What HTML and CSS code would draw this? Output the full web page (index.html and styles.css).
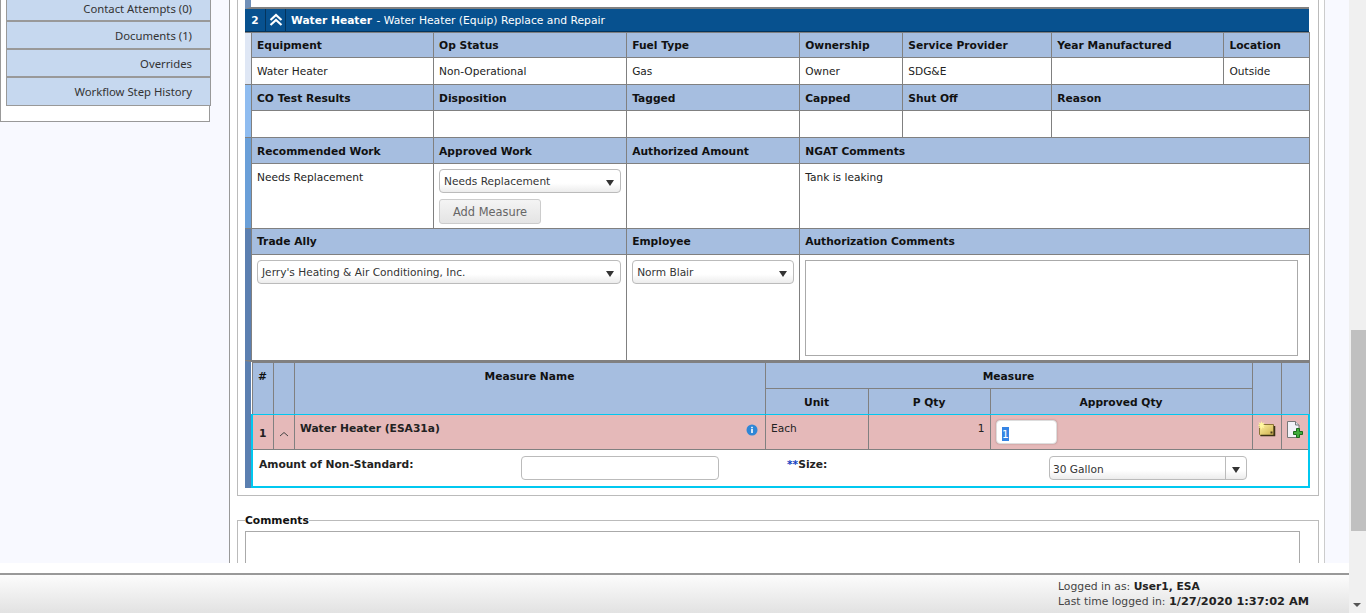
FILE: index.html
```html
<!DOCTYPE html>
<html lang="en">
<head>
    <meta charset="UTF-8">
    <meta name="viewport" content="width=device-width, initial-scale=1.0">
    <title>Work Order</title>
    <link rel="stylesheet" href="styles.css">
</head>
<body>
    <div class="shell">
        <div class="app">
            <div class="content">
                <div class="side">
                    <div class="panel">
                        <div class="tab tab-first">Contact Attempts (0)</div>
                        <div class="tab">Documents (1)</div>
                        <div class="tab">Overrides</div>
                        <div class="tab">Workflow Step History</div>
                    </div>
                </div>
                <div class="main">
                    <div class="section">
                        <div class="prev"></div>
                        <div class="head-bar">
                            <span class="head-num">2</span>
                            <span class="head-toggle">
                                <svg width="14" height="14" viewBox="0 0 14 14"><path d="M1.500 7 7 2l5.500 5M1.500 12 7 7l5.500 5" fill="none" stroke="#fff" stroke-width="2.200"/></svg>
                            </span>
                            <span class="head-title"><b>Water Heater</b> - Water Heater (Equip) Replace and Repair</span>
                        </div>
                        <table class="equip">
                            <colgroup>
                                <col class="c-strip"><col class="c1"><col class="c2"><col class="c3"><col class="c4"><col class="c5"><col class="c6"><col class="c7">
                            </colgroup>
                            <tr class="r-head r-flat r-first">
                                <td class="strip s1" rowspan="2"></td>
                                <th>Equipment</th><th>Op Status</th><th>Fuel Type</th><th>Ownership</th><th>Service Provider</th><th>Year Manufactured</th><th>Location</th>
                            </tr>
                            <tr class="r-val">
                                <td>Water Heater</td><td>Non-Operational</td><td>Gas</td><td>Owner</td><td>SDG&amp;E</td><td></td><td>Outside</td>
                            </tr>
                            <tr class="r-head">
                                <td class="strip s2" rowspan="2"></td>
                                <th>CO Test Results</th><th>Disposition</th><th>Tagged</th><th>Capped</th><th>Shut Off</th><th colspan="2">Reason</th>
                            </tr>
                            <tr class="r-val">
                                <td></td><td></td><td></td><td></td><td></td><td colspan="2"></td>
                            </tr>
                            <tr class="r-head">
                                <td class="strip s3" rowspan="2"></td>
                                <th>Recommended Work</th><th>Approved Work</th><th>Authorized Amount</th><th colspan="4">NGAT Comments</th>
                            </tr>
                            <tr class="r-work">
                                <td class="top top-text">Needs Replacement</td>
                                <td class="top">
                                    <div class="combo">Needs Replacement<span class="arrow"></span></div>
                                    <div class="btn">Add Measure</div>
                                </td>
                                <td></td>
                                <td class="top top-text" colspan="4">Tank is leaking</td>
                            </tr>
                            <tr class="r-head r-flat">
                                <td class="strip s4" rowspan="2"></td>
                                <th colspan="2">Trade Ally</th><th>Employee</th><th colspan="4">Authorization Comments</th>
                            </tr>
                            <tr class="r-ally">
                                <td class="top" colspan="2"><div class="combo">Jerry's Heating &amp; Air Conditioning, Inc.<span class="arrow"></span></div></td>
                                <td class="top"><div class="combo">Norm Blair<span class="arrow"></span></div></td>
                                <td class="top" colspan="4"><div class="memo"></div></td>
                            </tr>
                        </table>
                        <div class="measures-wrap">
                            <table class="measures">
                                <colgroup>
                                    <col class="m1"><col class="m2"><col class="m3"><col class="m4"><col class="m5"><col class="m6"><col class="m7"><col class="m8">
                                </colgroup>
                                <tr class="mh1">
                                    <th rowspan="2" class="center up shift">#</th>
                                    <th rowspan="2"></th>
                                    <th rowspan="2" class="center up">Measure Name</th>
                                    <th colspan="3" class="center">Measure</th>
                                    <th rowspan="2"></th>
                                    <th rowspan="2"></th>
                                </tr>
                                <tr class="mh2">
                                    <th class="center">Unit</th><th class="center">P Qty</th><th class="center">Approved Qty</th>
                                </tr>
                                <tr class="m-row">
                                    <td class="center shift"><b>1</b></td>
                                    <td class="center">
                                        <svg width="10" height="6" viewBox="0 0 10 6"><path d="M1 5 5 1.500 9 5" fill="none" stroke="#444" stroke-width="1"/></svg>
                                    </td>
                                    <td class="up name">
                                        <b>Water Heater (ESA31a)</b>
                                        <svg class="info" width="12" height="12" viewBox="0 0 12 12"><circle cx="6" cy="6" r="5.500" fill="#2f86d6"/><rect x="5.200" y="5" width="1.600" height="4" fill="#fff"/><rect x="5.200" y="2.800" width="1.600" height="1.500" fill="#fff"/></svg>
                                    </td>
                                    <td class="up">Each</td>
                                    <td class="up right">1</td>
                                    <td class="up"><div class="qty"><span class="sel">1</span></div></td>
                                    <td class="center icon-cell">
                                        <svg width="18" height="16" viewBox="0 0 18 16">
                                            <defs>
                                                <linearGradient id="folderFill" x1="0" y1="0" x2="1" y2="1">
                                                    <stop offset="0" stop-color="#fff0a0"/>
                                                    <stop offset="1" stop-color="#cdb04e"/>
                                                </linearGradient>
                                            </defs>
                                            <path d="M1.500 3.500h14v11h-13l-1-1z" fill="url(#folderFill)" stroke="#8a7434"/>
                                            <path d="M2.500 14.500h14V5" fill="none" stroke="#3d3215" stroke-width="1.500"/>
                                            <rect x="12.500" y="10.500" width="2" height="2" fill="#4a3d1c"/>
                                            <path d="M3.500 0 4.300 2.200 6.500 1.200 5.400 3.400 7.500 4.200 5.400 5 6.500 7.200 4.300 6.200 3.500 8.400 2.700 6.200.5 7.200 1.600 5-.5 4.200 1.600 3.400.5 1.200 2.700 2.200z" fill="#fff6a0"/>
                                        </svg>
                                    </td>
                                    <td class="center icon-cell">
                                        <svg width="18" height="18" viewBox="0 0 18 18">
                                            <path d="M1.500 .5h8L13 4v12.500H1.500z" fill="#f2f3f8" stroke="#777"/>
                                            <path d="M9.500 .5V4H13" fill="#dfe3ea" stroke="#777"/>
                                            <path d="M10.500 7.500h3v3h3v3h-3v3h-3v-3h-3v-3h3z" fill="#3fae3a" stroke="#1d6b1c"/>
                                        </svg>
                                    </td>
                                </tr>
                                <tr class="m-sub">
                                    <td colspan="8">
                                        <div class="sub-row">
                                            <span class="sub-label"><b>Amount of Non-Standard:</b></span>
                                            <span class="sub-input"></span>
                                            <span class="sub-size"><b><span class="req">**</span>Size:</b></span>
                                            <div class="combo combo-size">30 Gallon<span class="arrow-box"><span class="arrow"></span></span></div>
                                        </div>
                                    </td>
                                </tr>
                            </table>
                        </div>
                    </div>
                    <fieldset class="comments">
                        <legend>Comments</legend>
                        <div class="comment-box"></div>
                    </fieldset>
                </div>
                <div class="gutter"></div>
            </div>
            <div class="footer">
                <div class="footer-bar">
                    <div class="login">
                        <div>Logged in as: <b>User1, ESA</b></div>
                        <div>Last time logged in: <b class="login-date">1/27/2020 1:37:02 AM</b></div>
                    </div>
                </div>
            </div>
        </div>
        <div class="scrollbar">
            <div class="thumb"></div>
            <span class="scroll-down"></span>
        </div>
    </div>
</body>
</html>
```

FILE: styles.css
```css
html, body {
    margin: 0;
    padding: 0;
    height: 100%;
    overflow: hidden;
}

body {
    font-family: "DejaVu Sans", Verdana, sans-serif;
    font-size: 10.600px;
    color: #222;
    background-color: #f8f9ff;
}

b, th {
    font-size: 10.700px;
}

.shell {
    display: flex;
    height: 613px;
}

.app {
    flex: 1;
    display: flex;
    flex-direction: column;
    min-width: 0;
}

.content {
    display: flex;
    height: 563px;
    overflow: hidden;
}

/* left menu */
.side {
    width: 229px;
    border-right: 1px solid #999;
    flex-shrink: 0;
}

.panel {
    width: 210px;
    height: 122px;
    box-sizing: border-box;
    background-color: #fff;
    border: 1px solid #999;
    border-top: none;
}

.tab {
    width: 205px;
    height: 28px;
    margin-left: 5px;
    padding-right: 18px;
    box-sizing: border-box;
    background-color: #c6d8ef;
    border: 1px solid #999;
    border-top: none;
    border-bottom: 2px solid #999;
    font-family: "Noto Sans", sans-serif;
    font-size: 11.300px;
    line-height: 28px;
    text-align: right;
    color: #333;
}

.tab-first {
    height: 22px;
    line-height: 17px;
}

.tab:last-child {
    border-bottom: 1px solid #999;
}

/* main column */
.main {
    width: 1095px;
    flex-shrink: 0;
    background-color: #fff;
    border-right: 1px solid #ccc;
    padding-left: 7px;
    box-sizing: border-box;
}

.section {
    width: 1082px;
    box-sizing: border-box;
    border: 1px solid #bbb;
    border-top: none;
    padding: 0 0 7px 7px;
}

.prev {
    height: 7px;
    width: 1058px;
    border-left: 6px solid #6f8fb8;
    border-bottom: 2px solid #808080;
}

.head-bar {
    display: flex;
    align-items: stretch;
    width: 1064px;
    height: 23px;
    box-sizing: border-box;
    background-color: #07518f;
    border-bottom: 1px solid #04345c;
    color: #fff;
    line-height: 23px;
}

.head-num {
    width: 20px;
    text-align: center;
    font-weight: bold;
    border-right: 1px solid #04345c;
}

.head-toggle {
    width: 19px;
    display: flex;
    align-items: center;
    justify-content: center;
    border-right: 1px solid #04345c;
}

.head-title {
    padding-left: 5px;
    font-size: 10.750px;
}

.head-title b {
    margin-right: 1px;
}

/* equipment table */
.equip {
    width: 1065px;
    border-collapse: collapse;
    table-layout: fixed;
}

.equip td, .equip th,
.measures td, .measures th {
    border: 1px solid #808080;
    padding: 0 5px 0 5.500px;
    text-align: left;
    font-weight: normal;
}

.equip th, .measures th {
    background-color: #a6bee0;
    font-weight: bold;
    color: #111;
    padding-top: 2px;
}

.equip .r-flat th {
    padding-top: 0;
}

.c-strip { width: 6px; }
.c1 { width: 182px; }
.c2 { width: 193px; }
.c3 { width: 173px; }
.c4 { width: 103px; }
.c5 { width: 149px; }
.c6 { width: 172px; }
.c7 { width: 86px; }

.equip td.strip {
    padding: 0;
    border-left: none;
}

.s1 { background-color: #dfe7f5; }
.s2 { background-color: #8fbcf0; }
.s3 { background-color: #6a9fd8; }
.s4 { background-color: #5b7fb0; }

.r-head { height: 26px; }
.r-first { height: 25px; }
.r-val { height: 27px; }
.r-work { height: 65px; }
.r-ally { height: 106px; }

.equip td.top {
    vertical-align: top;
    padding-top: 5px;
}

.equip td.top-text {
    padding-top: 7px;
}

.combo {
    position: relative;
    height: 24px;
    box-sizing: border-box;
    border: 1px solid #bbb;
    border-radius: 4px;
    background: linear-gradient(#fff, #fff 60%, #ececec);
    line-height: 22px;
    padding-left: 4px;
    color: #333;
}

.arrow {
    position: absolute;
    right: 6px;
    top: 10px;
    border-left: 4px solid transparent;
    border-right: 4px solid transparent;
    border-top: 6px solid #333;
}

.btn {
    width: 102px;
    height: 25px;
    margin-top: 6px;
    box-sizing: border-box;
    border: 1px solid #ccc;
    border-radius: 3px;
    background: linear-gradient(#f4f4f4, #e4e4e4);
    text-align: center;
    font-size: 11.400px;
    line-height: 24px;
    color: #666;
}

.memo {
    width: 491px;
    height: 94px;
    border: 1px solid #aaa;
}

/* measures */
.measures-wrap {
    width: 1058px;
    border-left: 6px solid #5b7fb0;
    border-top: 1px solid #808080;
    border-right: 1px solid #808080;
}

.measures {
    width: 1058px;
    border-collapse: collapse;
    table-layout: fixed;
}

.m1 { width: 21px; }
.m2 { width: 21px; }
.m3 { width: 471px; }
.m4 { width: 103px; }
.m5 { width: 122px; }
.m6 { width: 262px; }
.m7 { width: 29px; }
.m8 { width: 28px; }

.measures th.center, .measures td.center {
    text-align: center;
    padding: 2px 0 0;
}

.measures .shift {
    padding-left: 1px;
}

.mh1 { height: 26px; }
.mh2 { height: 26px; }

.measures th[rowspan], .mh2 th {
    border-bottom: 1px solid #00c8f0;
}

.measures th.up {
    vertical-align: top;
    padding-top: 7px;
}

.measures td.up {
    vertical-align: top;
    padding-top: 7px;
}

.m-row {
    height: 35px;
    background-color: #e5b9b9;
}

.measures .m-row td {
    border-top: 1px solid #00c8f0;
}

.measures .m-row td:first-child { border-left: 2px solid #00c8f0; }
.measures .m-row td:last-child { border-right: 2px solid #00c8f0; }

.measures td.name {
    position: relative;
}

.info {
    position: absolute;
    right: 7px;
    top: 9px;
}

.measures td.right {
    text-align: right;
}

.measures td.icon-cell {
    vertical-align: top;
    padding-top: 6px;
}

.qty {
    width: 61px;
    height: 24px;
    margin-top: -2px;
    box-sizing: border-box;
    background-color: #fff;
    border: 1px solid #ddd;
    border-radius: 4px;
    box-shadow: 0 0 2px #a88;
    line-height: 24px;
    padding-left: 5px;
}

.sel {
    display: inline-block;
    height: 14px;
    line-height: 14px;
    vertical-align: middle;
    background-color: #3584e4;
    color: #fff;
}

.measures td.center svg {
    vertical-align: middle;
}

.measures .m-sub td {
    border: 2px solid #00c8f0;
    border-top: 1px solid #808080;
    padding: 0;
    background-color: #fff;
}

.sub-row {
    display: flex;
    align-items: flex-start;
    height: 36px;
    padding: 6px 0 0 6px;
    box-sizing: border-box;
}

.sub-label {
    width: 262px;
    line-height: 17px;
}

.sub-input {
    width: 198px;
    height: 24px;
    box-sizing: border-box;
    border: 1px solid #bbb;
    border-radius: 4px;
}

.sub-size {
    margin-left: 68px;
    width: 262px;
    line-height: 17px;
}

.req {
    color: #1040c0;
}

.combo-size {
    width: 198px;
    line-height: 25px;
    padding-left: 3px;
}

.arrow-box {
    position: absolute;
    right: 0;
    top: 0;
    bottom: 0;
    width: 20px;
    border-left: 1px solid #bbb;
}

.comments {
    width: 1082px;
    box-sizing: border-box;
    margin: 18px 0 0;
    padding: 4px 18px 0 7px;
    border: 1px solid #bbb;
    border-bottom: none;
}

.comments legend {
    padding: 0;
    font-size: 10.700px;
    font-weight: bold;
    color: #111;
}

.comment-box {
    height: 60px;
    border: 1px solid #aaa;
}

.gutter {
    flex: 1;
}

/* footer */
.footer {
    height: 50px;
    box-sizing: border-box;
    background-color: #fff;
    padding-top: 10px;
}

.footer-bar {
    height: 40px;
    box-sizing: border-box;
    border-top: 2px solid #999;
    background: linear-gradient(#fcfcfc, #e2e2e2);
    padding: 4px 0 0 1058px;
    color: #444;
    line-height: 15px;
    font-size: 10.800px;
}

.login b {
    color: #222;
}

.login .login-date {
    font-size: 11.350px;
}

/* page scrollbar */
.scrollbar {
    position: relative;
    width: 17px;
    flex-shrink: 0;
    box-sizing: border-box;
    background-color: #f0f0f0;
    padding: 330px 0 0 2px;
}

.thumb {
    height: 201px;
    background-color: #c0c0c0;
}

.scroll-down {
    position: absolute;
    left: 4px;
    bottom: 6px;
    border-left: 4px solid transparent;
    border-right: 4px solid transparent;
    border-top: 4px solid #555;
}
```
